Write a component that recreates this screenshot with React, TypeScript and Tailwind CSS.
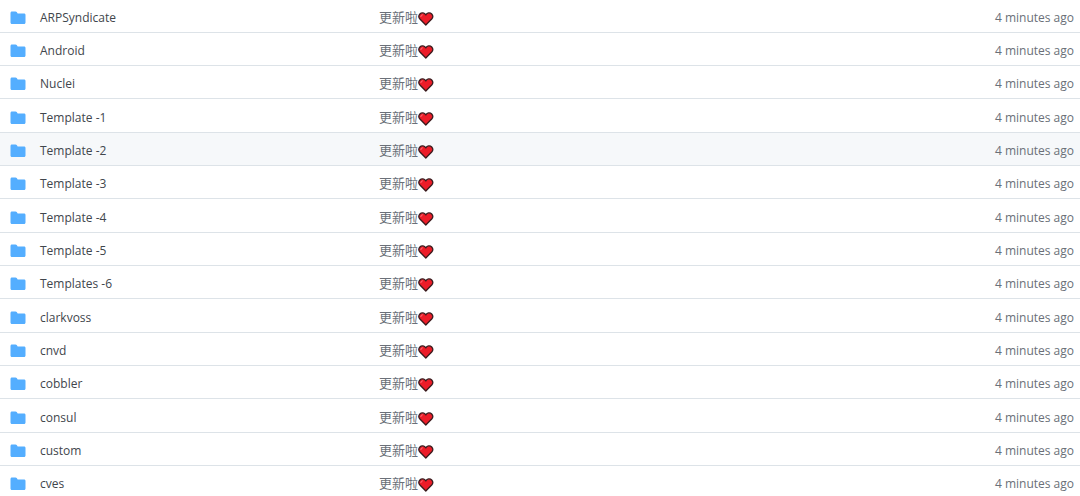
interface FolderRow {
  name: string;
  message: string;
  age: string;
  active?: boolean;
}

const folderNames = [
  "ARPSyndicate",
  "Android",
  "Nuclei",
  "Template -1",
  "Template -2",
  "Template -3",
  "Template -4",
  "Template -5",
  "Templates -6",
  "clarkvoss",
  "cnvd",
  "cobbler",
  "consul",
  "custom",
  "cves",
];

const rows: FolderRow[] = folderNames.map((name) => ({
  name,
  message: "更新啦",
  age: "4 minutes ago",
  active: name === "Template -2",
}));

function FolderIcon() {
  return (
    <svg viewBox="0 0 16 16" className="block size-4" fill="#54aeff" aria-hidden="true">
      <path d="M1.9 1.5h3.6c.5 0 .9.2 1.2.6l.8 1.1c.1.2.3.3.5.3h6.1c.8 0 1.4.6 1.4 1.4v7.6c0 .9-.6 1.5-1.4 1.5H1.9c-.8 0-1.4-.6-1.4-1.5V3C.5 2.2 1.1 1.5 1.9 1.5Z" />
    </svg>
  );
}

function HeartIcon() {
  return (
    <svg viewBox="0 0 16 16" className="block size-4" role="img" aria-label="heart">
      <path
        d="M7.8 14 1.9 8C.7 6.7.7 4.4 1.9 3c1.7-1.8 4.6-1.3 5.9.9C9.1 1.7 12 1.2 13.7 3c1.2 1.4 1.2 3.7 0 5L7.8 14Z"
        fill="#ec1c28"
        stroke="#3a1a1c"
        strokeWidth="1.3"
        strokeLinejoin="round"
      />
      <path d="M2.9 6c0-1.4.7-2.1 1.9-2.2" fill="none" stroke="#fa7680" strokeWidth="1" />
    </svg>
  );
}

export default function App() {
  return (
    <div className="max-h-screen overflow-hidden bg-white font-['Open_Sans','Noto_Sans_CJK_SC',sans-serif] text-xs text-[#6a7078]">
      <table className="w-full table-fixed border-separate border-spacing-0">
        <tbody>
          {rows.map((row) => (
            <tr
              key={row.name}
              className={`h-[33px] [&:nth-child(3n+4)]:h-[34px] [&>td]:border-b [&>td]:border-[#dde3e8] [&>td]:p-0 ${
                row.active ? "bg-[#f6f8fa]" : ""
              }`}
            >
              <td className="w-[379px]">
                <div className="flex items-center gap-3.5 pt-1 pl-2.5">
                  <FolderIcon />
                  <a href="#" className="text-[#41464c]">
                    {row.name}
                  </a>
                </div>
              </td>
              <td>
                <div className="flex items-end pt-1">
                  <span className="pb-0.5 text-[13px] leading-4">{row.message}</span>
                  <HeartIcon />
                </div>
              </td>
              <td className="w-40">
                <div className="pt-1 pr-1.5 text-right">{row.age}</div>
              </td>
            </tr>
          ))}
        </tbody>
      </table>
    </div>
  );
}
